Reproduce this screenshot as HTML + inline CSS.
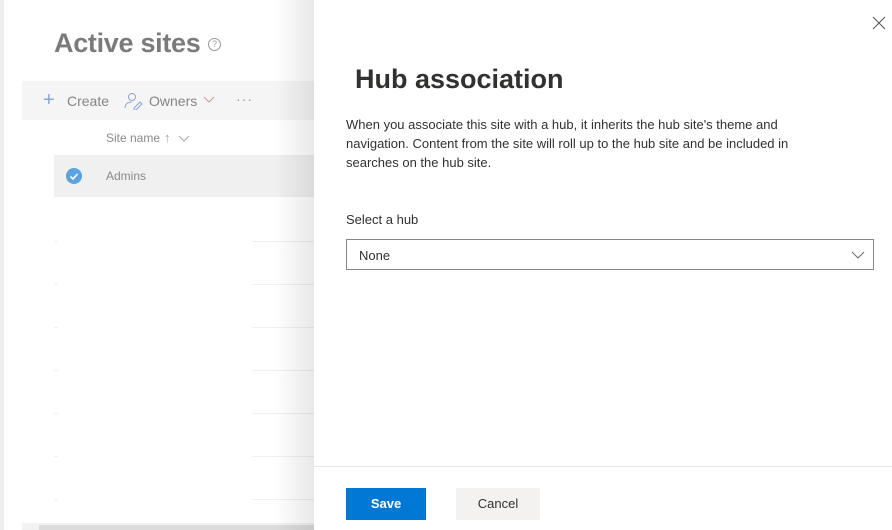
<!DOCTYPE html>
<html><head><meta charset="utf-8"><style>
*{margin:0;padding:0;box-sizing:border-box}
body{width:892px;height:530px;overflow:hidden;background:#fff;font-family:"Liberation Sans",sans-serif;position:relative}
.abs{position:absolute}
.t{color:#858585;font-size:14px}
.ln{position:absolute;height:1px;background:#f0f0f0}
</style></head><body>
<div class="abs" style="left:0;top:0;width:4px;height:530px;background:#efefef"></div>
<div class="abs" style="left:54px;top:28px;font-size:27px;font-weight:bold;color:#7b7b7b;letter-spacing:-0.3px">Active sites</div>
<div class="abs" style="left:208px;top:38px;width:13px;height:13px;border:1px solid #999;border-radius:50%;font-size:9px;color:#999;text-align:center;line-height:11px">?</div>
<div class="abs" style="left:22px;top:81px;width:292px;height:39px;background:#f5f5f5"></div>
<div class="abs" style="left:43px;top:92px;font-size:20px;color:#8aa6d6;line-height:16px;font-weight:300">+</div>
<div class="abs t" style="left:67px;top:93px">Create</div>
<svg class="abs" style="left:124px;top:92px" width="20" height="18" viewBox="0 0 20 18"><circle cx="8" cy="5" r="3.5" fill="none" stroke="#8aa6d6"/><path d="M1 16c0-4 3-6 7-6" fill="none" stroke="#8aa6d6"/><path d="M10 16l6-6 2 2-6 6h-2z" fill="none" stroke="#8aa6d6"/></svg>
<div class="abs t" style="left:149px;top:93px">Owners</div>
<svg class="abs" style="left:203px;top:96px" width="12" height="8"><path d="M1 1l5 5 5-5" fill="none" stroke="#c89a9a"/></svg>
<div class="abs" style="left:236px;top:91px;color:#999;font-size:14px;letter-spacing:1px">···</div>
<div class="abs" style="left:106px;top:131px;font-size:12px;color:#8a8a8a">Site name</div>
<div class="abs" style="left:164px;top:130px;font-size:13px;color:#8aa6d6">↑</div>
<svg class="abs" style="left:178px;top:135px" width="12" height="8"><path d="M1 1l5 5 5-5" fill="none" stroke="#aaa"/></svg>
<div class="abs" style="left:54px;top:155px;width:260px;height:42px;background:#f0f0f0"></div>
<div class="abs" style="left:66px;top:168px;width:16px;height:16px;border-radius:50%;background:#5ba2e0"></div>
<svg class="abs" style="left:66px;top:168px" width="16" height="16"><path d="M4.5 8.5l2.5 2.5 4.5-5" fill="none" stroke="#fff" stroke-width="1.6"/></svg>
<div class="abs" style="left:106px;top:169px;font-size:12px;color:#8a8a8a">Admins</div>
<div class="ln" style="left:54px;top:241px;width:4px"></div><div class="ln" style="left:252px;top:241px;width:62px"></div>
<div class="ln" style="left:54px;top:284px;width:4px"></div><div class="ln" style="left:252px;top:284px;width:62px"></div>
<div class="ln" style="left:54px;top:327px;width:4px"></div><div class="ln" style="left:252px;top:327px;width:62px"></div>
<div class="ln" style="left:54px;top:370px;width:4px"></div><div class="ln" style="left:252px;top:370px;width:62px"></div>
<div class="ln" style="left:54px;top:413px;width:4px"></div><div class="ln" style="left:252px;top:413px;width:62px"></div>
<div class="ln" style="left:54px;top:456px;width:4px"></div><div class="ln" style="left:252px;top:456px;width:62px"></div>
<div class="ln" style="left:54px;top:499px;width:4px"></div><div class="ln" style="left:252px;top:499px;width:62px"></div>
<div class="abs" style="left:22px;top:523px;width:292px;height:7px;background:#f2f2f2"></div>
<div class="abs" style="left:39px;top:525px;width:275px;height:5px;background:#dcdcdc"></div>
<div class="abs" style="left:274px;top:0;width:40px;height:530px;background:linear-gradient(to right,rgba(0,0,0,0),rgba(0,0,0,0.09))"></div>
<div class="abs" style="left:314px;top:0;width:578px;height:530px;background:#fff"></div>
<svg class="abs" style="left:872px;top:16px" width="14" height="14"><path d="M1 1l12 12M13 1L1 13" stroke="#555" stroke-width="1"/></svg>
<div class="abs" style="left:355px;top:64px;font-size:27px;font-weight:bold;color:#323130">Hub association</div>
<div class="abs" style="left:346px;top:115px;width:478px;font-size:13px;line-height:19px;color:#323130">When you associate this site with a hub, it inherits the hub site's theme and navigation. Content from the site will roll up to the hub site and be included in searches on the hub site.</div>
<div class="abs" style="left:346px;top:212px;font-size:13px;color:#323130">Select a hub</div>
<div class="abs" style="left:346px;top:239px;width:528px;height:31px;border:1px solid #8a8886"></div>
<div class="abs" style="left:359px;top:248px;font-size:13px;color:#323130">None</div>
<svg class="abs" style="left:851px;top:251px" width="14" height="8"><path d="M1 1l6 6 6-6" fill="none" stroke="#666"/></svg>
<div class="abs" style="left:314px;top:466px;width:578px;height:1px;background:#e5e5e5"></div>
<div class="abs" style="left:346px;top:488px;width:80px;height:32px;background:#0078d4;color:#fff;font-weight:bold;font-size:13px;text-align:center;line-height:32px">Save</div>
<div class="abs" style="left:456px;top:488px;width:84px;height:32px;background:#f3f2f1;color:#323130;font-size:13px;text-align:center;line-height:32px">Cancel</div>
</body></html>
